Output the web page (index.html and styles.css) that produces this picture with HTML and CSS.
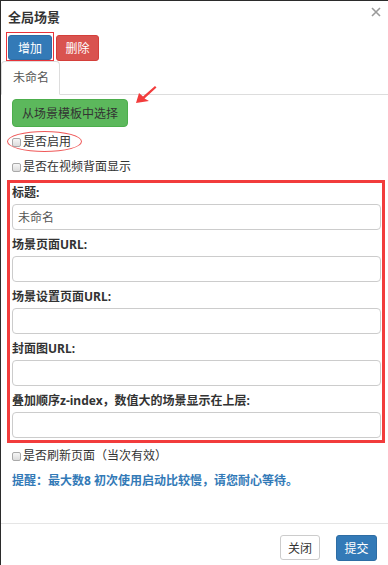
FILE: index.html
```html
<!DOCTYPE html>
<html lang="zh">
<head>
    <meta charset="UTF-8">
    <title>全局场景</title>
    <link rel="stylesheet" href="styles.css">
</head>
<body>
<div class="modal">
    <!-- 标题栏 -->
    <div class="modal-header">
        <span class="modal-title">全局场景</span>
        <svg class="close" width="10" height="10" viewBox="0 0 10 10">
            <path d="M1 1L9 9M9 1L1 9" stroke="#9a9a9a" stroke-width="1.6"/>
        </svg>
    </div>

    <!-- 增加/删除 -->
    <div class="tool-row">
        <span class="mark-box"><a class="btn btn-primary btn-add" href="javascript:">增加</a></span>
        <a class="btn btn-danger btn-del" href="javascript:">删除</a>
    </div>

    <!-- 场景页签 -->
    <ul class="nav-tabs">
        <li class="active">未命名</li>
    </ul>

    <div class="modal-body">
        <a class="btn btn-success btn-pick" href="javascript:">从场景模板中选择</a>

        <label class="check-row first"><span class="checkbox"></span>是否启用</label>
        <label class="check-row"><span class="checkbox"></span>是否在视频背面显示</label>

        <div class="mark-frame">
            <div class="form-group">
                <div class="form-label">标题:</div>
                <input class="form-control" type="text" value="未命名">
            </div>
            <div class="form-group">
                <div class="form-label">场景页面URL:</div>
                <input class="form-control" type="text">
            </div>
            <div class="form-group">
                <div class="form-label">场景设置页面URL:</div>
                <input class="form-control" type="text">
            </div>
            <div class="form-group">
                <div class="form-label">封面图URL:</div>
                <input class="form-control" type="text">
            </div>
            <div class="form-group">
                <div class="form-label">叠加顺序z-index，数值大的场景显示在上层:</div>
                <input class="form-control" type="text">
            </div>
        </div>

        <label class="check-row refresh"><span class="checkbox"></span>是否刷新页面（当次有效）</label>
        <p class="tip">提醒：最大数8 初次使用启动比较慢，请您耐心等待。</p>
    </div>

    <div class="modal-footer">
        <a class="btn btn-default" href="javascript:">关闭</a>
        <a class="btn btn-primary btn-submit" href="javascript:">提交</a>
    </div>

    <!-- 标注 -->
    <span class="mark-ellipse"></span>
    <svg class="mark-arrow" width="24" height="22" viewBox="0 0 24 22">
        <polygon points="2,19 5,9 9,12.5 21,2 22.5,3.5 10.5,14.5 15,17" fill="#f23c3c"/>
    </svg>
</div>
</body>
</html>
```

FILE: styles.css
```css
* {
    margin: 0;
    padding: 0;
    box-sizing: border-box;
}

body {
    background-color: #2b2b2b;
    font-family: "Noto Sans", "Noto Sans CJK SC", sans-serif;
    font-size: 12px;
    color: #333;
}

/* 弹出框 */
.modal {
    position: relative;
    margin: 1px 0 0 1px;
    width: 387px;
    height: 564px;
    background-color: #fff;
    display: flex;
    flex-direction: column;
}

.modal-header {
    display: flex;
    justify-content: space-between;
    align-items: flex-start;
    padding: 7px 7px 0 7px;
}

.modal-title {
    font-size: 13px;
    font-weight: bold;
    line-height: 18px;
}

.close {
    margin-top: -1px;
}

/* 按钮 */
.btn {
    display: inline-flex;
    align-items: center;
    justify-content: center;
    text-decoration: none;
    font-size: 12px;
    border-radius: 3px;
    border: 1px solid transparent;
    color: #fff;
}

.btn-primary {
    background-color: #337ab7;
    border-color: #2e6da4;
}

.btn-danger {
    background-color: #d9534f;
    border-color: #d43f3a;
}

.btn-success {
    background-color: #5cb85c;
    border-color: #4cae4c;
    color: #333;
}

.btn-default {
    background-color: #fff;
    border-color: #ccc;
    color: #333;
}

.tool-row {
    display: flex;
    align-items: flex-start;
    margin-top: 6px;
    padding-left: 5px;
    height: 29px;
}

.mark-box {
    display: inline-block;
    border: 1px solid #e8333a;
    padding: 2px 1px 0 1px;
}

.btn-add {
    width: 44px;
    height: 25px;
}

.btn-del {
    margin: 3px 0 0 2px;
    width: 43px;
    height: 26px;
}

/* 页签 */
.nav-tabs {
    list-style: none;
    display: flex;
    border-bottom: 1px solid #ddd;
}

.nav-tabs li {
    width: 59px;
    height: 34px;
    margin-bottom: -1px;
    border: 1px solid #ddd;
    border-bottom-color: #fff;
    border-radius: 4px 4px 0 0;
    padding-left: 11px;
    line-height: 31px;
    color: #555;
}

/* 内容 */
.modal-body {
    flex: 1;
    padding: 0 3px 0 6px;
}

.btn-pick {
    margin: 4px 0 0 5px;
    width: 116px;
    height: 28px;
    border-radius: 4px;
}

.check-row {
    display: flex;
    align-items: center;
    margin: 5px 0 0 5px;
    line-height: 20px;
}

.check-row.first {
    margin-top: 5px;
}

.check-row.refresh {
    margin-top: 3px;
}

.checkbox {
    width: 9px;
    height: 9px;
    margin-right: 2px;
    border: 1px solid #a9a9a9;
    border-radius: 2px;
    background: linear-gradient(#f6f6f6, #dcdcdc);
}

.mark-frame {
    margin-top: 3px;
    width: 378px;
    border: 3px solid #f23c3c;
    padding: 1px 1px 2px 2px;
}

.form-group + .form-group {
    margin-top: 6px;
}

.form-label {
    font-weight: bold;
    line-height: 18px;
    margin-bottom: 2px;
}

.form-control {
    display: block;
    width: 100%;
    height: 26px;
    border: 1px solid #ccc;
    border-radius: 4px;
    padding: 0 5px;
    font-family: inherit;
    font-size: 12px;
    color: #555;
    outline: none;
}

.tip {
    margin: 5px 0 0 5px;
    line-height: 20px;
    font-weight: bold;
    color: #337ab7;
}

/* 底部 */
.modal-footer {
    display: flex;
    justify-content: flex-end;
    border-top: 1px solid #e5e5e5;
    padding: 11px 11px 0 0;
    height: 42px;
}

.btn-default {
    width: 40px;
    height: 25px;
}

.btn-submit {
    margin-left: 16px;
    width: 41px;
    height: 26px;
}

/* 标注：圈和箭头 */
.mark-ellipse {
    position: absolute;
    left: 6px;
    top: 130px;
    width: 75px;
    height: 21px;
    border: 1px solid #ef5a5a;
    border-radius: 50%;
}

.mark-arrow {
    position: absolute;
    left: 133px;
    top: 83px;
}
```
